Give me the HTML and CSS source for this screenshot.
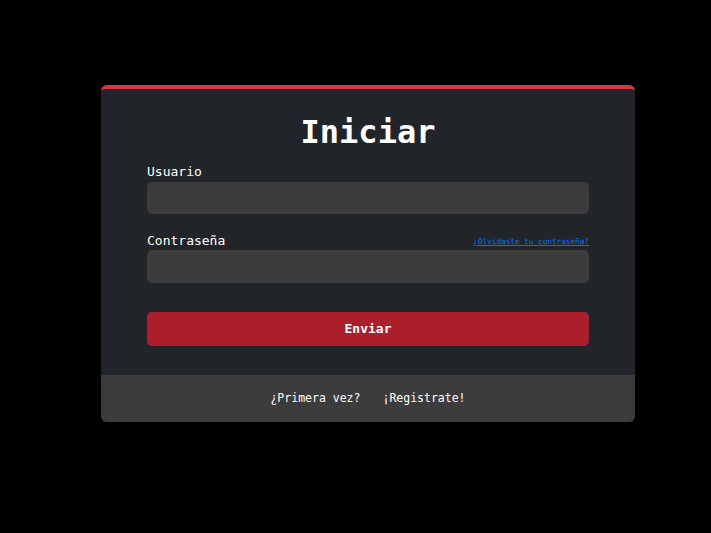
FILE: index.html
```html
<!DOCTYPE html>
<html lang="es">
<head>
<meta charset="utf-8">
<title>Iniciar</title>
<link rel="stylesheet" href="styles.css">
</head>
<body>
<div class="card">
  <div class="card-body">
    <h1 class="title">Iniciar</h1>
    <form class="form">
      <div class="field">
        <label class="label" for="user">Usuario</label>
        <input class="input" id="user" type="text">
      </div>
      <div class="field">
        <div class="label-row">
          <label class="label" for="pass">Contraseña</label>
          <a class="forgot" href="#">¿Olvidaste tu contraseña?</a>
        </div>
        <input class="input input-tall" id="pass" type="password">
      </div>
      <button class="submit" type="button">Enviar</button>
    </form>
  </div>
  <div class="card-footer">
    <span>¿Primera vez?</span>
    <a class="register" href="#">¡Registrate!</a>
  </div>
</div>
</body>
</html>
```
FILE: styles.css
```css
html, body {
  margin: 0;
  background: #000;
}
body {
  padding-top: 85px;
  font-family: "DejaVu Sans Mono", monospace;
  color: #fff;
}
.card {
  margin-left: 101px;
  width: 534px;
  background: #212529;
  border-top: 4px solid #dc3545;
  border-radius: 6px;
  overflow: hidden;
}
.card-body {
  padding: 24px 46px 29px;
}
.title {
  margin: 0;
  font-size: 32px;
  line-height: 38.4px;
  font-weight: bold;
  text-align: center;
}
.form {
  margin-top: 11px;
  display: flex;
  flex-direction: column;
}
.field {
  display: flex;
  flex-direction: column;
}
.field + .field {
  margin-top: 15px;
}
.label {
  font-size: 13px;
  line-height: 19.5px;
}
.label-row {
  display: flex;
  justify-content: space-between;
  align-items: flex-end;
  height: 21px;
}
.label-row .label {
  line-height: 19px;
}
.forgot {
  font-size: 7.7px;
  color: #0d6efd;
  text-decoration: underline;
  margin-bottom: 4px;
}
.input {
  box-sizing: border-box;
  height: 32px;
  background: #3c3c3c;
  border: none;
  border-radius: 5px;
  padding: 0 12px;
  color: #fff;
  font-family: inherit;
}
.input-tall {
  height: 33px;
}
.submit {
  margin-top: 29px;
  height: 34px;
  background: #ab1f2b;
  border: none;
  border-radius: 5px;
  color: #fff;
  font-family: "DejaVu Sans Mono", monospace;
  font-weight: bold;
  font-size: 13px;
}
.card-footer {
  background: #3c3c3c;
  height: 47px;
  display: flex;
  justify-content: center;
  align-items: center;
  gap: 22px;
  font-size: 11.5px;
  font-weight: normal;
}
.register {
  color: #fff;
  text-decoration: none;
}
```
